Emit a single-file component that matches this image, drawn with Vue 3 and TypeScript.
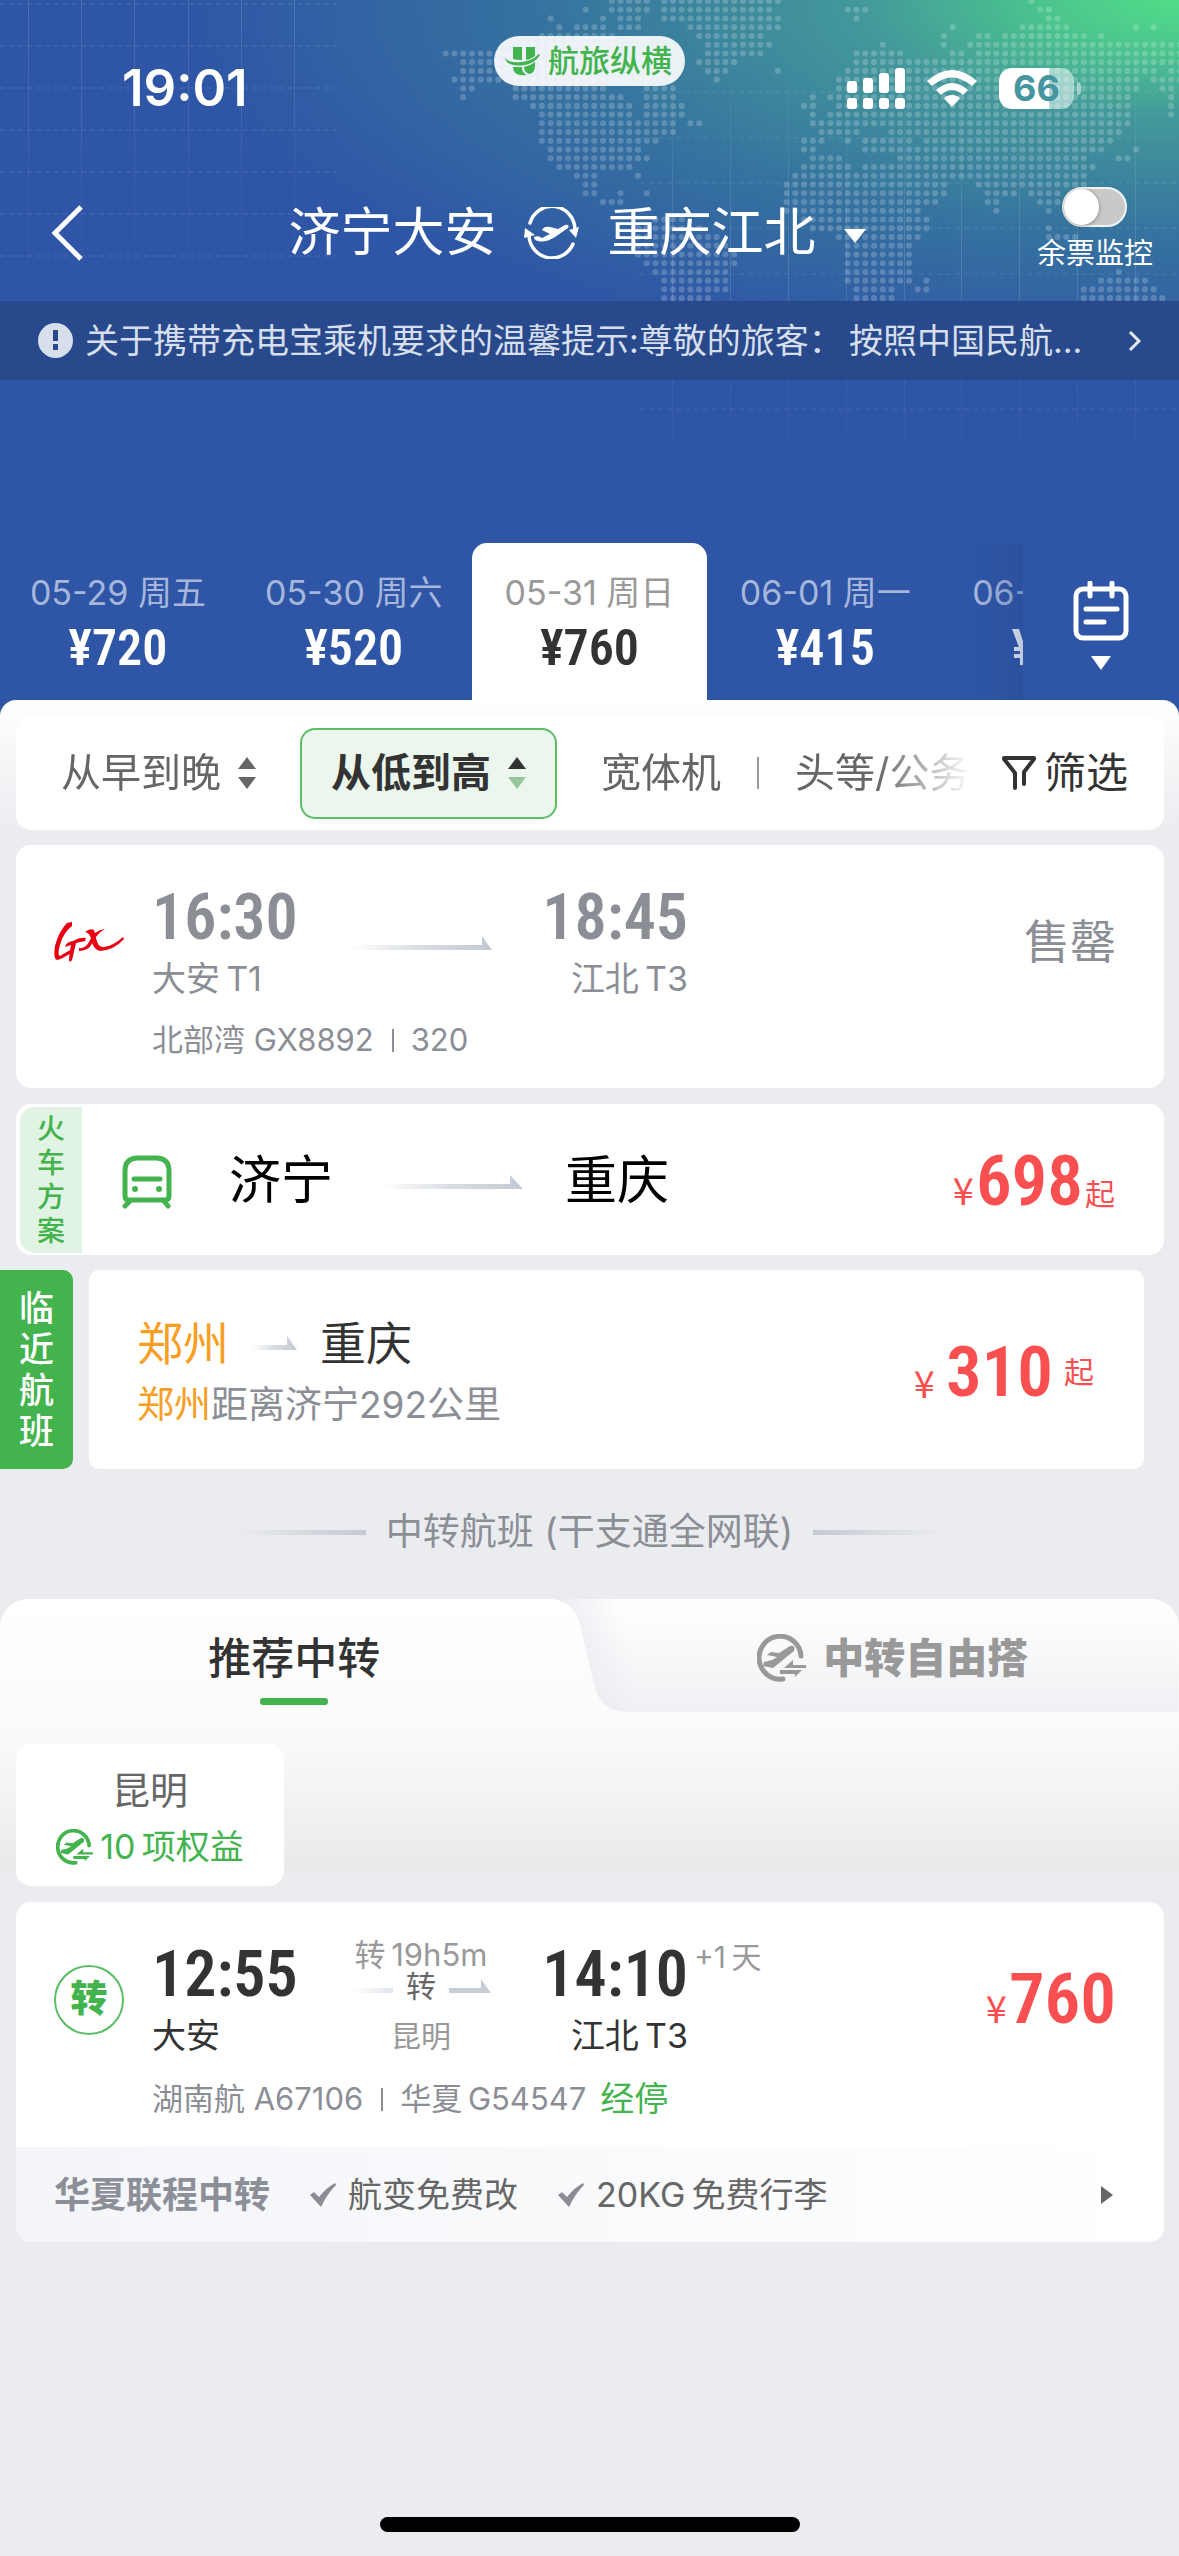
<script setup lang="ts">
import { ref } from 'vue'

interface DayFare {
  date: string
  price: string
}

const days: DayFare[] = [
  { date: '05-29 周五', price: '¥720' },
  { date: '05-30 周六', price: '¥520' },
  { date: '05-31 周日', price: '¥760' },
  { date: '06-01 周一', price: '¥415' },
  { date: '06-02 周二', price: '¥430' },
]
const selectedDay = ref(2)
const monitoring = ref(false)

// Dotted world map: for every row, pairs of first and last dot column.
const mapRows: number[][] = [
  [70, 74, 76, 89, 118, 118],
  [67, 67, 70, 74, 76, 88, 97, 99, 119, 120],
  [63, 63, 69, 69, 71, 73, 76, 89, 98, 98, 120, 121],
  [64, 64, 66, 69, 71, 73, 79, 89, 109, 109, 117, 122, 130, 130, 132, 132],
  [62, 70, 80, 87, 108, 108, 112, 113, 115, 124, 126, 126],
  [60, 70, 81, 88, 101, 101, 108, 108, 111, 113, 114, 135],
  [51, 70, 81, 87, 98, 103, 109, 110, 112, 135],
  [53, 72, 80, 84, 98, 104, 105, 135],
  [53, 74, 81, 83, 89, 89, 97, 132, 134, 135],
  [52, 74, 82, 82, 96, 130, 132, 135],
  [53, 54, 59, 69, 74, 77, 96, 130, 133, 134],
  [53, 53, 59, 71, 74, 77, 93, 93, 95, 129, 134, 134],
  [61, 72, 74, 78, 92, 93, 96, 129, 134, 134],
  [62, 72, 74, 78, 93, 93, 95, 129, 134, 134],
  [62, 77, 79, 80, 93, 129],
  [62, 77, 94, 98, 102, 128],
  [62, 75, 92, 94, 97, 97, 99, 104, 106, 127],
  [63, 73, 92, 93, 99, 104, 105, 125, 126, 126, 130, 130],
  [63, 74, 93, 96, 103, 124, 128, 129],
  [64, 72, 92, 97, 99, 100, 101, 106, 107, 125],
  [66, 68, 73, 73, 91, 106, 107, 124],
  [67, 68, 90, 108, 112, 124],
  [67, 68, 71, 71, 74, 74, 90, 108, 113, 116, 118, 121],
  [69, 71, 90, 104, 105, 107, 113, 114, 119, 121],
  [90, 105, 114, 114, 120, 120],
  [75, 78, 92, 106],
  [73, 80, 93, 106, 120, 120],
  [73, 82, 96, 105, 120, 123],
  [73, 83, 97, 104],
  [73, 84, 97, 104],
  [74, 84, 97, 104],
  [75, 83, 97, 104, 128, 128],
  [76, 83, 97, 104, 106, 106, 126, 131],
  [76, 83, 98, 102, 105, 106, 124, 132],
  [76, 81, 98, 102, 124, 133],
]

const mapPath = mapRows
  .map((row, y) => {
    let d = ''
    for (let i = 0; i < row.length; i += 2) {
      d += `M${row[i]} ${y}H${row[i + 1] + 0.1}`
    }
    return d
  })
  .join('')

const leftVerticals = [28, 81, 134, 188, 241, 294]
const leftHorizontals = [4, 46, 88, 130, 172, 214, 256]
const rightVerticals = [672, 730, 788, 846, 904, 961, 1019, 1077, 1135]
const rightHorizontals = [92, 138, 183, 228, 274, 319, 364, 409]
</script>

<template>
  <div class="screen">
    <header class="header">
      <svg class="backdrop" viewBox="0 0 1179 520" preserveAspectRatio="xMidYMin slice" aria-hidden="true">
        <defs>
          <linearGradient id="fadeLeft" x1="0" y1="0" x2="0" y2="300" gradientUnits="userSpaceOnUse">
            <stop offset="0" stop-color="#fff" stop-opacity=".14" />
            <stop offset="1" stop-color="#fff" stop-opacity="0" />
          </linearGradient>
          <linearGradient id="fadeRight" x1="0" y1="40" x2="0" y2="480" gradientUnits="userSpaceOnUse">
            <stop offset="0" stop-color="#fff" stop-opacity="0" />
            <stop offset=".5" stop-color="#fff" stop-opacity=".14" />
            <stop offset="1" stop-color="#fff" stop-opacity="0" />
          </linearGradient>
        </defs>
        <path
          v-for="x in leftVerticals"
          :key="'lv' + x"
          :d="`M${x} 0h1v300h-1z`"
          fill="url(#fadeLeft)"
        />
        <path
          v-for="y in leftHorizontals"
          :key="'lh' + y"
          :d="`M0 ${y}H337`"
          stroke="#fff"
          stroke-opacity=".14"
          stroke-width="1"
          stroke-dasharray="5 4"
        />
        <path
          v-for="x in rightVerticals"
          :key="'rv' + x"
          :d="`M${x} 40h1v440h-1z`"
          fill="url(#fadeRight)"
        />
        <path
          v-for="y in rightHorizontals"
          :key="'rh' + y"
          :d="`M640 ${y}H1179`"
          stroke="#fff"
          stroke-opacity=".1"
          stroke-width="1"
          stroke-dasharray="5 4"
        />
        <path
          :d="mapPath"
          transform="translate(0 1) scale(8.74)"
          fill="none"
          stroke="#fff"
          stroke-opacity=".2"
          stroke-width=".7"
          stroke-linecap="round"
          stroke-dasharray="0 1"
        />
      </svg>

      <div class="status">
        <span class="clock">19:01</span>
        <div class="brand">
          <svg width="35" height="29" viewBox="0 0 35 29" aria-hidden="true">
            <path d="M8 0H17V13Q12 13 8 12ZM21 0H30V9Q26 12 21 13Z" fill="#43b34e" />
            <path d="M0 10Q1 14 8 15Q24 17 34 7L35 8Q30 16 20 18Q7 20 2 15Q0 13 0 10Z" fill="#43b34e" />
            <path d="M8 20H17V22Q18 26 22 28Q8 30 8 20ZM19 20Q25 19 30 15V19Q30 26 24 27Q19 25 19 20Z" fill="#43b34e" />
          </svg>
          <span>航旅纵横</span>
        </div>
        <div class="indicators">
          <svg width="58" height="41" viewBox="0 0 58 41" fill="#fff" aria-label="信号">
            <rect x="0" y="13" width="10" height="12" rx="3" />
            <rect x="16" y="10" width="10" height="15" rx="3" />
            <rect x="32" y="5" width="10" height="20" rx="3" />
            <rect x="48" y="0" width="10" height="25" rx="3" />
            <rect x="0" y="30" width="10" height="11" rx="3" />
            <rect x="16" y="30" width="10" height="11" rx="3" />
            <rect x="32" y="30" width="10" height="11" rx="3" />
            <rect x="48" y="30" width="10" height="11" rx="3" />
          </svg>
          <svg width="50" height="37" viewBox="0 0 50 37" fill="#fff" aria-label="Wi-Fi">
            <path d="M25 37L17.500 29Q17 28 18 27Q25 23 32 27Q33 28 32.500 29Z" />
            <path d="M9 20Q25 6 41 20L36 25Q25 15 14 25Z" />
            <path d="M0 11Q25 -11 50 11L45 16Q25 -1 5 16Z" />
          </svg>
          <span class="battery">66</span>
        </div>
      </div>

      <div class="nav">
        <button class="back" aria-label="返回">
          <svg width="32" height="56" viewBox="0 0 32 56" aria-hidden="true">
            <path d="M30 2L4 28L30 54" fill="none" stroke="#fff" stroke-width="5" />
          </svg>
        </button>
        <h1 class="route">
          <span>济宁大安</span>
          <svg width="55" height="52" viewBox="0 0 55 52" aria-hidden="true">
            <path d="M6 16A23 23.500 0 0 1 51 23" fill="none" stroke="#fff" stroke-width="3.500" stroke-linecap="round" />
            <path d="M55 20L45 23L52 31Z" fill="#fff" />
            <path d="M5 29A23 23.500 0 0 0 49 37" fill="none" stroke="#fff" stroke-width="3.500" stroke-linecap="round" />
            <path d="M1 21L11 28L0 31Z" fill="#fff" />
            <path d="M10 30Q14 28 18 31L26 27L18 23Q20 19 26 20L34 22L41 18Q46 17 44 21L31 30Q21 36 14 34Q10 33 10 30Z" fill="#fff" />
          </svg>
          <span>重庆江北</span>
          <svg class="caret" width="22" height="14" viewBox="0 0 22 14" aria-hidden="true">
            <path d="M0 0H22L11 14Z" fill="#fff" />
          </svg>
        </h1>
        <label class="monitor">
          <input v-model="monitoring" type="checkbox" role="switch" />
          <span>余票监控</span>
        </label>
      </div>

      <a class="notice" href="#notice">
        <svg width="35" height="35" viewBox="0 0 35 35" aria-hidden="true">
          <circle cx="17.500" cy="17.500" r="17.500" fill="#d7deec" />
          <path d="M15 7H20V18H15ZM15 21H20V27H15Z" fill="#284a8d" />
        </svg>
        <span class="notice-text">关于携带充电宝乘机要求的温馨提示:尊敬的旅客：&thinsp;按照中国民航...</span>
        <svg width="13" height="22" viewBox="0 0 13 22" aria-hidden="true">
          <path d="M2 2L11 11L2 20" fill="none" stroke="#e6eaf3" stroke-width="3" />
        </svg>
      </a>

      <div class="dates">
        <button
          v-for="(day, index) in days"
          :key="day.date"
          class="day"
          :class="{ active: index === selectedDay }"
          @click="selectedDay = index"
        >
          <span class="day-date">{{ day.date }}</span>
          <span class="day-price">{{ day.price }}</span>
        </button>
        <button class="calendar" aria-label="选择日期">
          <svg width="56" height="60" viewBox="0 0 56 60" fill="none" stroke="#fff" stroke-width="5" stroke-linecap="round" aria-hidden="true">
            <rect x="3" y="8" width="50" height="49" rx="7" />
            <path d="M17 2V15M39 2V15" />
            <path d="M13 28H44M13 41H31" />
          </svg>
          <svg width="20" height="14" viewBox="0 0 20 14" aria-hidden="true">
            <path d="M0 0H20L10 14Z" fill="#fff" />
          </svg>
        </button>
      </div>
    </header>

    <main class="content">
      <div class="filters">
        <div class="filter-scroll">
          <button class="filter">
            <span>从早到晚</span>
            <svg width="18" height="32" viewBox="0 0 18 32" fill="#666" aria-hidden="true">
              <path d="M0 12L9 0L18 12ZM0 20L9 32L18 20Z" />
            </svg>
          </button>
          <button class="filter chosen">
            <span>从低到高</span>
            <svg width="18" height="32" viewBox="0 0 18 32" aria-hidden="true">
              <path d="M0 12L9 0L18 12Z" fill="#333" />
              <path d="M0 20L9 32L18 20Z" fill="#96c49b" />
            </svg>
          </button>
          <button class="filter">宽体机</button>
          <span class="divider"></span>
          <button class="filter">头等/公务</button>
        </div>
        <button class="screening">
          <svg width="34" height="36" viewBox="0 0 34 36" fill="none" stroke="#333" stroke-width="4" stroke-linecap="round" stroke-linejoin="round" aria-hidden="true">
            <path d="M13 33V18L2 4V3H32V4L22 17V29" />
          </svg>
          <span>筛选</span>
        </button>
      </div>

      <article class="card trip soldout">
        <svg class="carrier" width="70" height="41" viewBox="0 0 70 41" fill="#e60012" aria-label="北部湾航空">
          <path d="M18 0L13 1Q5 9 1 24Q-1 37 3 38Q8 37 17 31L18 27Q11 31 6 34Q3 33 6 23Q9 11 18 4Z" />
          <path d="M11 25Q12 20 19 19Q26 15 32 16L31 19L22 21L19 34Q18 41 15 39Q15 32 17 23Z" />
          <path d="M31 10Q36 6 40 8L42 16Q44 26 50 25Q59 24 69 15L70 17Q60 28 46 29Q40 28 38 20Q36 10 31 10Z" />
          <path d="M51 7Q42 12 38 22Q34 29 25 29V26Q31 27 35 20Q40 8 51 7Z" />
        </svg>
        <div class="legs">
          <div class="stop">
            <span class="time">16:30</span>
            <span class="place">大安&thinsp;T1</span>
          </div>
          <svg class="arrow" width="142" height="14" viewBox="0 0 142 14" aria-hidden="true">
            <defs>
              <linearGradient id="arrowFade">
                <stop offset="0" stop-color="#c3cad3" stop-opacity="0" />
                <stop offset=".5" stop-color="#c3cad3" stop-opacity=".65" />
                <stop offset="1" stop-color="#c3cad3" />
              </linearGradient>
            </defs>
            <path d="M0 9H132V0L142 14H0Z" fill="url(#arrowFade)" />
          </svg>
          <div class="stop arrival">
            <span class="time">18:45</span>
            <span class="place">江北&thinsp;T3</span>
          </div>
        </div>
        <strong class="gone">售罄</strong>
        <p class="info">
          <span>北部湾 GX8892</span>
          <span class="bar"></span>
          <span>320</span>
        </p>
      </article>

      <article class="card train">
        <span class="train-tag">火车方案</span>
        <svg class="train-icon" width="50" height="54" viewBox="0 0 50 54" fill="none" stroke="#43b34e" stroke-width="5" stroke-linecap="round" aria-hidden="true">
          <path d="M3 16Q3 3 16 3H34Q47 3 47 16V41Q47 45 43 45H7Q3 45 3 41Z" />
          <path d="M12 24H38" />
          <path d="M8 46L3 51M42 46L46 51" />
          <circle cx="13" cy="34" r="3" fill="#43b34e" stroke="none" />
          <circle cx="37" cy="34" r="3" fill="#43b34e" stroke="none" />
        </svg>
        <span class="train-city">济宁</span>
        <svg class="train-arrow" width="142" height="14" viewBox="0 0 142 14" aria-hidden="true">
          <path d="M0 9H129V0L142 14H0Z" fill="url(#arrowFade)" />
        </svg>
        <span class="train-city">重庆</span>
        <p class="price">
          <span class="yen">¥</span><span class="amount">698</span><span class="from">起</span>
        </p>
      </article>

      <section class="nearby">
        <h2 class="nearby-tag"><span>临近航班</span></h2>
        <article class="nearby-card">
          <div class="nearby-text">
            <p class="nearby-route">
              <span class="orange">郑州</span>
              <svg width="45" height="14" viewBox="0 0 45 14" aria-hidden="true">
                <path d="M0 9H35V0L45 14H0Z" fill="url(#arrowFade)" />
              </svg>
              <span>重庆</span>
            </p>
            <p class="nearby-note"><span class="orange">郑州</span>距离济宁292公里</p>
          </div>
          <p class="price spaced">
            <span class="yen">¥</span><span class="amount">310</span><span class="from">起</span>
          </p>
        </article>
      </section>

      <h2 class="section-title">
        <span class="rule"></span>
        <span>中转航班 (干支通全网联)</span>
        <span class="rule right"></span>
      </h2>

      <section class="transfer">
        <div class="tabs">
          <svg class="tab-shape" viewBox="0 0 633 113" preserveAspectRatio="none" aria-hidden="true">
            <defs>
              <linearGradient id="tabDown" x1="0" y1="0" x2="0" y2="1">
                <stop offset="0" stop-color="#fff" />
                <stop offset="1" stop-color="#f0f1f4" />
              </linearGradient>
              <linearGradient id="tabEdge" x1="20" y1="56" x2="85" y2="42" gradientUnits="userSpaceOnUse">
                <stop offset="0" stop-color="#e9eaf0" />
                <stop offset="1" stop-color="#e9eaf0" stop-opacity="0" />
              </linearGradient>
            </defs>
            <path d="M10 0Q32 2 38 26L53 90Q60 112 84 113H633V0Z" fill="url(#tabDown)" />
            <path d="M10 0Q32 2 38 26L53 90Q60 112 84 113H110V0Z" fill="url(#tabEdge)" />
          </svg>
          <button class="tab current">推荐中转</button>
          <button class="tab free">
            <svg width="49" height="48" viewBox="0 0 49 48" aria-hidden="true">
              <path d="M44 22A21 21.500 0 1 0 26 45" fill="none" stroke="#999" stroke-width="5" stroke-linecap="round" />
              <path d="M10 21L14 18L22 19L33 12Q39 11 37 17L16 34L6 32L7 28L15 26L20 23Z" fill="#999" />
              <path d="M27 34L36 26V31H49V34H27ZM23 36H45L38 43V40H23Z" fill="#999" />
            </svg>
            <span>中转自由搭</span>
          </button>
        </div>
        <button class="city">
          <span class="city-name">昆明</span>
          <span class="city-perks">
            <svg width="37" height="36" viewBox="0 0 49 48" aria-hidden="true">
              <path d="M44 22A21 21.500 0 1 0 26 45" fill="none" stroke="#43b34e" stroke-width="5" stroke-linecap="round" />
              <path d="M10 21L14 18L22 19L33 12Q39 11 37 17L16 34L6 32L7 28L15 26L20 23Z" fill="#43b34e" />
              <path d="M27 34L36 26V31H49V34H27ZM23 36H45L38 43V40H23Z" fill="#43b34e" />
            </svg>
            <span>10&thinsp;项权益</span>
          </span>
        </button>
      </section>

      <article class="card result">
        <div class="trip">
          <span class="carrier badge">转</span>
          <div class="legs">
            <div class="stop">
              <span class="time">12:55</span>
              <span class="place">大安</span>
            </div>
            <div class="via">
              <span class="via-time">转&thinsp;19h5m</span>
              <span class="via-line">
                <svg width="42" height="14" viewBox="0 0 42 14" aria-hidden="true">
                  <defs>
                    <linearGradient id="viaFade">
                      <stop offset="0" stop-color="#e1e6ec" stop-opacity="0" />
                      <stop offset="1" stop-color="#e1e6ec" />
                    </linearGradient>
                  </defs>
                  <path d="M0 9H42V14H0Z" fill="url(#viaFade)" />
                </svg>
                <span>转</span>
                <svg width="42" height="14" viewBox="0 0 42 14" aria-hidden="true">
                  <path d="M0 9H32V0L42 14H0Z" fill="#c6cdd6" />
                </svg>
              </span>
              <span class="via-city">昆明</span>
            </div>
            <div class="stop arrival">
              <span class="time">14:10<sup class="plus">+1&thinsp;天</sup></span>
              <span class="place">江北&thinsp;T3</span>
            </div>
          </div>
          <p class="price"><span class="yen">¥</span><span class="amount">760</span></p>
          <p class="info">
            <span>湖南航 A67106</span>
            <span class="bar"></span>
            <span>华夏&thinsp;G54547</span>
            <span class="stopover">经停</span>
          </p>
        </div>
        <a class="perks" href="#perks">
          <strong>华夏联程中转</strong>
          <span class="perk">
            <svg width="26" height="24" viewBox="0 0 26 24" aria-hidden="true">
              <path d="M0 12L4 9L9 14Q16 5 25 0L26 2Q17 11 11 24Z" fill="#8c8c96" />
            </svg>
            航变免费改
          </span>
          <span class="perk">
            <svg width="26" height="24" viewBox="0 0 26 24" aria-hidden="true">
              <path d="M0 12L4 9L9 14Q16 5 25 0L26 2Q17 11 11 24Z" fill="#8c8c96" />
            </svg>
            20KG&thinsp;免费行李
          </span>
          <svg class="more" width="12" height="18" viewBox="0 0 12 18" aria-hidden="true">
            <path d="M0 0L12 9L0 18Z" fill="#666" />
          </svg>
        </a>
      </article>

      <div class="home-bar"></div>
    </main>
  </div>
</template>

<style>
body {
  margin: 0;
  background: #ebecf0;
}
</style>

<style scoped>
.screen {
  display: flex;
  flex-direction: column;
  min-height: 100vh;
  background: #ebecf0;
  color: #333;
  font-family: Inter, 'Noto Sans CJK SC', sans-serif;
  overflow: hidden;
}

.screen * {
  box-sizing: border-box;
}

svg {
  display: block;
  flex: none;
}

button {
  margin: 0;
  padding: 0;
  border: 0;
  background: none;
  color: inherit;
  font: inherit;
  white-space: nowrap;
}

p,
h1,
h2 {
  margin: 0;
  font-weight: 400;
}

a {
  color: inherit;
  text-decoration: none;
}

/* Header */
.header {
  position: relative;
  padding-bottom: 16px;
  background:
    radial-gradient(ellipse 85% 370px at 100% 0, #52dd88 0, #4bc48e 14%, #43989b 32%, #36749f 62%, rgba(46, 85, 166, 0) 100%),
    #2e55a6;
  color: #fff;
}

.backdrop {
  position: absolute;
  top: 0;
  left: 0;
  width: 100%;
  height: 520px;
}

.status {
  position: relative;
  display: grid;
  grid-template-columns: 1fr auto 1fr;
  align-items: center;
  height: 176px;
  padding: 0 99px 0 122px;
}

.clock {
  font-size: 51px;
  font-weight: 600;
  line-height: 60px;
}

.brand {
  display: flex;
  align-items: center;
  align-self: start;
  gap: 8px;
  height: 50px;
  margin-top: 36px;
  margin-right: 23px;
  padding: 0 13px 0 11px;
  border-radius: 25px;
  background: rgba(255, 255, 255, 0.9);
  color: #43b34e;
  font-size: 31px;
  font-weight: 500;
  line-height: 40px;
}

.indicators {
  display: flex;
  align-items: center;
  justify-content: flex-end;
  gap: 22px;
}

.battery {
  position: relative;
  width: 75px;
  height: 41px;
  margin-right: 6px;
  border-radius: 13px;
  background: linear-gradient(to right, #fff 67%, rgba(255, 255, 255, 0.5) 67%);
  color: #4596a1;
  font-size: 36px;
  font-weight: 700;
  line-height: 41px;
  text-align: center;
}

.battery::after {
  content: '';
  position: absolute;
  top: 14px;
  left: 78px;
  width: 4px;
  height: 13px;
  border-radius: 0 4px 4px 0;
  background: rgba(255, 255, 255, 0.5);
}

.nav {
  position: relative;
  display: flex;
  align-items: center;
  height: 125px;
  padding: 0 26px 11px 51px;
}

.back {
  width: 66px;
}

.route {
  display: flex;
  flex: 1;
  align-items: center;
  justify-content: center;
  gap: 28px;
  font-size: 52px;
  line-height: 64px;
  white-space: nowrap;
}

.caret {
  margin-top: 6px;
}

.monitor {
  display: flex;
  flex-direction: column;
  align-items: center;
  align-self: flex-start;
  gap: 10px;
  margin-top: 11px;
  font-size: 29px;
  line-height: 34px;
}

.monitor input {
  width: 65px;
  height: 40px;
  margin: 0;
  border: 2px solid #f2f4f5;
  border-radius: 20px;
  background: #c9c9c9;
  appearance: none;
}

.monitor input::before {
  content: '';
  display: block;
  width: 35px;
  height: 36px;
  border-radius: 50%;
  background: #fff;
  box-shadow: 0 1px 4px rgba(0, 0, 0, 0.35);
}

.monitor input:checked::before {
  margin-left: auto;
}

.notice {
  position: relative;
  display: flex;
  align-items: center;
  gap: 12px;
  height: 79px;
  padding: 0 38px;
  background: #284a8d;
  color: #d7deec;
  font-size: 34px;
  line-height: 46px;
}

.notice-text {
  flex: 1;
  overflow: hidden;
  white-space: nowrap;
}

.dates {
  position: relative;
  display: flex;
  height: 157px;
  margin-top: 163px;
  overflow: hidden;
}

.day {
  display: flex;
  flex: 0 0 20%;
  flex-direction: column;
  align-items: center;
  gap: 9px;
  padding-top: 30px;
  border-radius: 15px 15px 0 0;
}

.day-date {
  color: #a7b7dc;
  font-size: 34px;
  line-height: 40px;
}

.day-price,
.time,
.amount {
  font-family: 'Liberation Sans Narrow', 'Roboto Condensed', Roboto, sans-serif;
  font-weight: 600;
}

.day-price {
  font-size: 50px;
  line-height: 52px;
}

.day.active {
  background: #fff;
  color: #333;
}

.day.active .day-date {
  color: #999;
}

.calendar {
  position: absolute;
  top: 0;
  right: 0;
  bottom: 0;
  display: flex;
  flex-direction: column;
  align-items: center;
  gap: 15px;
  width: 204px;
  padding: 38px 0 0 48px;
  background: linear-gradient(to right, rgba(39, 72, 140, 0), rgba(39, 72, 140, 0.3) 48px, #2e55a6 48px);
}

/* Content */
.content {
  position: relative;
  display: flex;
  flex: 1;
  flex-direction: column;
  margin-top: -16px;
  border-radius: 16px 16px 0 0;
  background: linear-gradient(#fff, #ebecf0 130px);
}

.filters {
  display: flex;
  align-items: center;
  height: 114px;
  margin: 16px 15px 0 16px;
  border-radius: 15px;
  background: #fff;
  color: #666;
  font-size: 40px;
  line-height: 56px;
}

.filter-scroll {
  display: flex;
  flex: 1;
  align-items: center;
  min-width: 0;
  padding-left: 45px;
  overflow: hidden;
  mask-image: linear-gradient(to left, transparent, #000 96px);
}

.filter {
  display: flex;
  flex: none;
  align-items: center;
  gap: 17px;
}

.filter.chosen {
  height: 91px;
  margin: 0 44px;
  padding: 0 29px;
  border: 2px solid #5cbd66;
  border-radius: 15px;
  background: #ebf6ec;
  color: #333;
  font-weight: 700;
}

.divider {
  flex: none;
  width: 2px;
  height: 32px;
  margin: 0 36px;
  background: #999;
}

.screening {
  display: flex;
  align-items: center;
  gap: 8px;
  padding: 0 36px 0 30px;
  color: #333;
  font-size: 42px;
}

.card {
  margin: 15px 15px 0 16px;
  border-radius: 15px;
  background: #fff;
}

.trip {
  display: grid;
  grid-template-columns: 70px 1fr auto;
  align-items: center;
  column-gap: 28px;
  row-gap: 20px;
  padding: 40px 48px 28px 38px;
}

.legs {
  display: grid;
  grid-template-columns: 198px 142px 196px;
}

.stop {
  display: flex;
  flex-direction: column;
  gap: 9px;
}

.time {
  position: relative;
  padding-top: 2px;
  font-size: 64px;
  line-height: 62px;
}

.place {
  font-size: 34px;
  line-height: 42px;
}

.arrival {
  align-items: flex-end;
}

.arrow {
  align-self: center;
}

.info {
  display: flex;
  grid-column: 2 / 4;
  align-items: center;
  color: #8c8e96;
  font-size: 31px;
  line-height: 40px;
}

.bar {
  width: 2px;
  height: 23px;
  margin: 0 17px 0 18px;
  background: #8c8e96;
}

.soldout {
  color: #8c8e96;
}

.gone {
  padding-bottom: 4px;
  font-size: 46px;
  font-weight: 400;
  line-height: 58px;
}

.price {
  display: flex;
  align-items: baseline;
  gap: 2px;
  padding-top: 6px;
  color: #f94f50;
  line-height: 80px;
}

.yen {
  font-family: 'Noto Sans CJK SC', sans-serif;
  font-size: 38px;
}

.amount {
  font-size: 71px;
}

.from {
  font-size: 30px;
}

/* Train */
.train {
  display: flex;
  align-items: center;
  height: 151px;
  margin-top: 16px;
  padding: 3px 49px 3px 4px;
}

.train-tag {
  width: 62px;
  padding: 5px 17px;
  border-radius: 15px 0 0 15px;
  background: #e1f4e3;
  color: #43b34e;
  font-size: 28px;
  font-weight: 500;
  line-height: 34px;
  word-break: break-all;
}

.train-icon {
  margin: 5px 57px 0 40px;
}

.train-city {
  padding-top: 2px;
  color: #000;
  font-size: 52px;
  line-height: 64px;
}

.train-arrow {
  margin: 5px 42px 0 48px;
}

.train .price {
  margin-left: auto;
  padding-top: 16px;
}

/* Nearby */
.nearby {
  display: flex;
  gap: 16px;
  height: 199px;
  margin: 15px 35px 0 0;
}

.nearby-tag {
  display: flex;
  align-items: center;
  width: 73px;
  padding: 0 19px;
  border-radius: 0 10px 10px 0;
  background: #43b34e;
  color: #fff;
  font-size: 35px;
  font-weight: 500;
  line-height: 41px;
  word-break: break-all;
}

.nearby-card {
  display: flex;
  flex: 1;
  align-items: center;
  justify-content: space-between;
  padding: 0 50px 0 48px;
  border-radius: 10px;
  background: #fff;
}

.nearby-text {
  display: flex;
  flex-direction: column;
  gap: 12px;
  padding-top: 2px;
}

.nearby-route {
  display: flex;
  align-items: center;
  gap: 23px;
  font-size: 46px;
  line-height: 56px;
}

.nearby-note {
  color: #8c8e96;
  font-size: 37px;
  line-height: 44px;
}

.orange {
  color: #f79e24;
}

.price.spaced {
  align-items: center;
  gap: 11px;
  padding-top: 4px;
}

.spaced .yen {
  margin-top: 20px;
}

/* Transfer section */
.section-title {
  display: flex;
  align-items: center;
  justify-content: center;
  gap: 20px;
  height: 130px;
  padding-bottom: 4px;
  color: #8c8e96;
  font-size: 37px;
  line-height: 48px;
}

.rule {
  width: 131px;
  height: 5px;
  background: linear-gradient(to right, rgba(195, 202, 211, 0), #c3cad3);
}

.rule.right {
  background: linear-gradient(to left, rgba(195, 202, 211, 0), #c3cad3);
}

.transfer {
  border-radius: 28px 28px 0 0;
  background: linear-gradient(#fff, #fbfbfb 45%, #e9ebea) no-repeat 0 0 / 100% 271px;
}

.tabs {
  position: relative;
  display: flex;
  height: 113px;
  overflow: hidden;
  border-radius: 28px 28px 0 0;
}

.tab-shape {
  position: absolute;
  top: 0;
  right: 0;
  width: 54%;
  height: 100%;
}

.tab {
  position: relative;
  display: flex;
  flex: 1 1 0;
  align-items: center;
  justify-content: center;
  padding-top: 5px;
  line-height: 56px;
}

.current {
  padding-left: 8px;
  font-size: 43px;
  font-weight: 500;
}

.current::after {
  content: '';
  position: absolute;
  bottom: 7px;
  left: 50%;
  width: 68px;
  height: 7px;
  margin-left: -30px;
  border-radius: 3px;
  background: #43b34e;
}

.free {
  gap: 17px;
  padding-left: 26px;
  color: #999;
  font-size: 41px;
  font-weight: 900;
}

.city {
  display: flex;
  flex-direction: column;
  align-items: center;
  gap: 12px;
  width: 268px;
  height: 142px;
  margin: 32px 15px 0 16px;
  padding-top: 23px;
  border-radius: 15px;
  background: #fff;
}

.city-name {
  color: #666;
  font-size: 38px;
  line-height: 46px;
}

.city-perks {
  display: flex;
  align-items: center;
  gap: 7px;
  color: #43b34e;
  font-size: 34px;
  line-height: 44px;
}

/* Transfer result */
.result {
  margin-top: 16px;
  overflow: hidden;
}

.result .trip {
  row-gap: 22px;
}

.badge {
  height: 70px;
  border: 2px solid #5cbd66;
  border-radius: 50%;
  color: #43b34e;
  font-size: 37px;
  font-weight: 900;
  line-height: 64px;
  text-align: center;
}

.via {
  display: flex;
  flex-direction: column;
  align-items: center;
  color: #999;
  font-size: 30px;
  white-space: nowrap;
}

.via-time {
  font-size: 31px;
  line-height: 26px;
}

.via-line {
  display: flex;
  align-items: center;
  gap: 13px;
  color: #666;
  line-height: 36px;
}

.via-city {
  margin-top: 11px;
  line-height: 42px;
}

.plus {
  position: absolute;
  top: 0;
  left: 100%;
  margin-left: 6px;
  color: #999;
  font-family: Inter, 'Noto Sans CJK SC', sans-serif;
  font-size: 30px;
  font-weight: 400;
  line-height: 30px;
  white-space: nowrap;
}

.stopover {
  margin-left: 14px;
  color: #43b34e;
  font-size: 34px;
}

.perks {
  display: flex;
  align-items: center;
  gap: 40px;
  height: 95px;
  padding: 0 51px 0 38px;
  background: linear-gradient(to right, #f4f5f9, #fff);
  color: #666;
  font-size: 34px;
  line-height: 44px;
}

.perks strong {
  color: #8c8e98;
  font-size: 36px;
  font-weight: 700;
}

.perk {
  display: flex;
  align-items: center;
  gap: 12px;
}

.more {
  margin-left: auto;
}

.home-bar {
  width: 420px;
  height: 15px;
  margin: auto auto 24px;
  border-radius: 8px;
  background: #000;
}
</style>
